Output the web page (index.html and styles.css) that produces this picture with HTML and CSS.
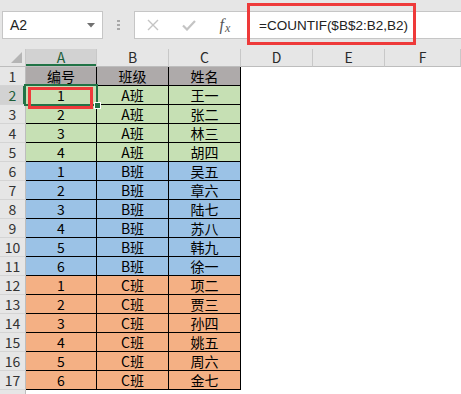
FILE: index.html
```html
<!DOCTYPE html>
<html>
<head>
  <title>COUNTIF</title>
  <link rel="stylesheet" href="styles.css">
</head>
<body>
  <div class="toolbar">
    <div class="namebox">
      <span>A2</span>
      <svg class="drop" width="8" height="5" viewBox="0 0 8 5"><path d="M0 0H8L4 4.5Z" fill="#707070"/></svg>
    </div>
    <div class="grip"><i></i><i></i><i></i></div>
    <div class="formula">
      <span class="fbtn">
        <svg width="12" height="12" viewBox="0 0 12 12"><path d="M1 1L11 11M11 1L1 11" stroke="#c4c4c4" stroke-width="1.4"/></svg>
      </span>
      <span class="fbtn">
        <svg width="14" height="11" viewBox="0 0 14 11"><path d="M1 5.5L5 9.5L13 1" stroke="#c4c4c4" stroke-width="2.2" fill="none"/></svg>
      </span>
      <span class="fbtn fx"><em>f</em><em class="x">x</em></span>
      <span class="ftext">=COUNTIF($B$2:B2,B2)</span>
      <div class="mark"></div>
    </div>
  </div>

  <div class="sheet">
    <table>
      <colgroup>
        <col class="c-head">
        <col class="c-a"><col class="c-b"><col class="c-c">
        <col class="c-d"><col class="c-e"><col class="c-f">
      </colgroup>
      <tr class="colhead">
        <td class="corner"><span class="tri"></span></td>
        <td class="sel">A</td><td>B</td><td>C</td><td>D</td><td>E</td><td>F</td>
      </tr>
      <tr class="hdr"><td class="rh">1</td><td>编号</td><td>班级</td><td>姓名</td><td class="e"></td><td class="e"></td><td class="e"></td></tr>
      <tr class="g"><td class="rh sel">2</td><td>1</td><td>A班</td><td>王一</td><td class="e"></td><td class="e"></td><td class="e"></td></tr>
      <tr class="g"><td class="rh">3</td><td>2</td><td>A班</td><td>张二</td><td class="e"></td><td class="e"></td><td class="e"></td></tr>
      <tr class="g"><td class="rh">4</td><td>3</td><td>A班</td><td>林三</td><td class="e"></td><td class="e"></td><td class="e"></td></tr>
      <tr class="g"><td class="rh">5</td><td>4</td><td>A班</td><td>胡四</td><td class="e"></td><td class="e"></td><td class="e"></td></tr>
      <tr class="b"><td class="rh">6</td><td>1</td><td>B班</td><td>吴五</td><td class="e"></td><td class="e"></td><td class="e"></td></tr>
      <tr class="b"><td class="rh">7</td><td>2</td><td>B班</td><td>章六</td><td class="e"></td><td class="e"></td><td class="e"></td></tr>
      <tr class="b"><td class="rh">8</td><td>3</td><td>B班</td><td>陆七</td><td class="e"></td><td class="e"></td><td class="e"></td></tr>
      <tr class="b"><td class="rh">9</td><td>4</td><td>B班</td><td>苏八</td><td class="e"></td><td class="e"></td><td class="e"></td></tr>
      <tr class="b"><td class="rh">10</td><td>5</td><td>B班</td><td>韩九</td><td class="e"></td><td class="e"></td><td class="e"></td></tr>
      <tr class="b"><td class="rh">11</td><td>6</td><td>B班</td><td>徐一</td><td class="e"></td><td class="e"></td><td class="e"></td></tr>
      <tr class="o"><td class="rh">12</td><td>1</td><td>C班</td><td>项二</td><td class="e"></td><td class="e"></td><td class="e"></td></tr>
      <tr class="o"><td class="rh">13</td><td>2</td><td>C班</td><td>贾三</td><td class="e"></td><td class="e"></td><td class="e"></td></tr>
      <tr class="o"><td class="rh">14</td><td>3</td><td>C班</td><td>孙四</td><td class="e"></td><td class="e"></td><td class="e"></td></tr>
      <tr class="o"><td class="rh">15</td><td>4</td><td>C班</td><td>姚五</td><td class="e"></td><td class="e"></td><td class="e"></td></tr>
      <tr class="o"><td class="rh">16</td><td>5</td><td>C班</td><td>周六</td><td class="e"></td><td class="e"></td><td class="e"></td></tr>
      <tr class="o"><td class="rh">17</td><td>6</td><td>C班</td><td>金七</td><td class="e"></td><td class="e"></td><td class="e"></td></tr>
      <tr class="tail"><td class="rh"></td><td class="e"></td><td class="e"></td><td class="e"></td><td class="e"></td><td class="e"></td><td class="e"></td></tr>
    </table>

    <!-- active cell A2 + annotation -->
    <div class="cursor"></div>
    <div class="handle"></div>
    <div class="cellmark"></div>
  </div>
</body>
</html>
```

FILE: styles.css
```css
body {
  margin: 0;
  background-color: #fff;
  font-family: "Noto Sans CJK SC", "Liberation Sans", sans-serif;
  color: #000;
  width: 461px;
  height: 394px;
  overflow: hidden;
}

/* formula bar */

.toolbar {
  display: flex;
  height: 49px;
  padding-top: 11px;
  box-sizing: border-box;
  background-color: #e6e6e6;
}

.namebox {
  display: flex;
  align-items: center;
  justify-content: space-between;
  width: 101px;
  height: 28px;
  margin-left: 2px;
  padding: 0 7px 0 7px;
  box-sizing: border-box;
  background-color: #fff;
  border: 1px solid #c6c6c6;
  font-family: "Liberation Sans", sans-serif;
  font-size: 14px;
  color: #222;
}

.namebox .drop {
  margin-top: 1px;
}

.grip {
  display: flex;
  flex-direction: column;
  align-items: center;
  justify-content: center;
  gap: 2px;
  width: 31px;
  height: 28px;
}

.grip i {
  display: block;
  width: 3px;
  height: 2px;
  background-color: #a8a8a8;
}

.formula {
  position: relative;
  display: flex;
  align-items: center;
  flex: 1;
  height: 28px;
  box-sizing: border-box;
  background-color: #fff;
  border: 1px solid #c6c6c6;
  border-right: none;
}

.fbtn {
  display: flex;
  align-items: center;
  justify-content: center;
  width: 36px;
  height: 100%;
}

.fx {
  font-family: "Liberation Serif", serif;
  color: #555;
}

.fx em {
  font-size: 16px;
  line-height: 1;
}

.fx em.x {
  font-size: 12px;
  margin-top: 5px;
  margin-left: 1px;
}

.ftext {
  padding-left: 16px;
  font-family: "Liberation Sans", sans-serif;
  font-size: 13.5px;
  color: #222;
}

.mark {
  position: absolute;
  left: 112px;
  top: -9px;
  width: 169px;
  height: 42px;
  box-sizing: border-box;
  border: 3px solid #ee3a3a;
}

/* sheet */

.sheet {
  position: relative;
}

.sheet table {
  border-collapse: separate;
  border-spacing: 0;
  table-layout: fixed;
  width: 461px;
}

.c-head { width: 26px; }
.c-a { width: 71px; }
.c-b, .c-c, .c-d, .c-e { width: 72px; }
.c-f { width: 76px; }

.sheet td {
  box-sizing: border-box;
  height: 19px;
  padding: 0;
  text-align: center;
  font-size: 14px;
  line-height: 18px;
  border-right: 1px solid #000;
  border-bottom: 1px solid #000;
  white-space: nowrap;
}

.sheet td.e {
  border: none;
  background-color: #fff;
}

.colhead td {
  height: 18px;
  line-height: 17px;
  font-size: 14px;
  color: #2a2a2a;
  background-color: #e6e6e6;
  border-right: 1px solid #c8c8c8;
  border-bottom: 1px solid #bdbdbd;
}

.colhead td.sel {
  background-color: #d2d2d2;
  color: #1d5e3a;
  box-shadow: inset 0 -2px #217346;
}

.corner {
  position: relative;
}

.tri {
  position: absolute;
  right: 3px;
  bottom: 3px;
  width: 0;
  height: 0;
  border-left: 11px solid transparent;
  border-bottom: 11px solid #b5b5b5;
}

.sheet td.rh {
  font-size: 14px;
  color: #333;
  background-color: #e6e6e6;
  border-right: 1px solid #bdbdbd;
  border-bottom: 1px solid #d4d4d4;
}

.sheet td.rh.sel {
  background-color: #d2d2d2;
  color: #1d5e3a;
  box-shadow: inset -2px 0 #217346;
}

.hdr td { background-color: #aeaaaa; }
.g td { background-color: #c6e0b4; }
.b td { background-color: #9bc2e6; }
.o td { background-color: #f4b084; }

.tail td {
  height: 8px;
}

.cursor {
  position: absolute;
  left: 24px;
  top: 35px;
  width: 74px;
  height: 22px;
  box-sizing: border-box;
  border: 2px solid #217346;
}

.handle {
  position: absolute;
  left: 94px;
  top: 53px;
  width: 7px;
  height: 7px;
  box-sizing: border-box;
  background-color: #217346;
  border: 1px solid #fff;
}

.cellmark {
  position: absolute;
  left: 28px;
  top: 38px;
  width: 65px;
  height: 22px;
  box-sizing: border-box;
  border: 3px solid #ee3a3a;
}
```
